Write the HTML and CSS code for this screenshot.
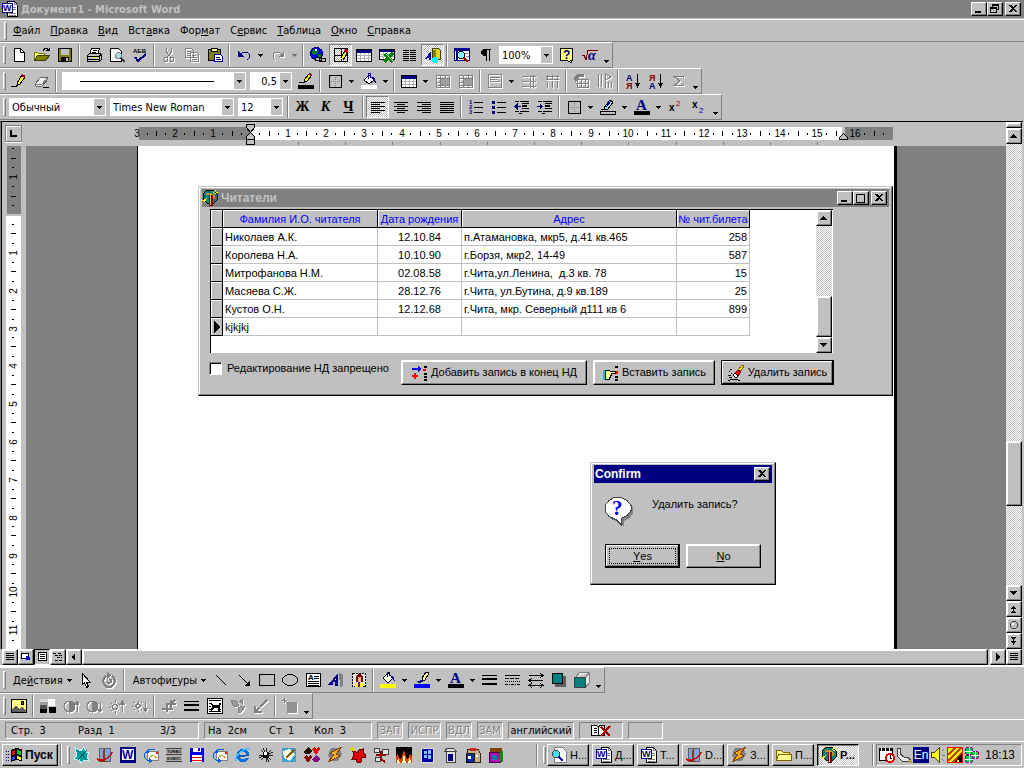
FILE: index.html
```html
<!DOCTYPE html>
<html lang="ru">
<head>
<meta charset="utf-8">
<title>Документ1 - Microsoft Word</title>
<link rel="stylesheet" href="styles.css">
</head>
<body>
<svg class="sprite" aria-hidden="true">
<symbol id="word" viewBox="0 0 16 16"><path d="M5.500.5h7l3 3v12h-10z" fill="#fff" stroke="#000"/><path d="M12.500.5v3h3M10 6.500h4M10 8.500h4M7 12.500h7M7 14h7" stroke="#808080" fill="none"/><path d="M.5 2.500h10v9h-10z" fill="#fff" stroke="#000080"/><text x="1" y="10" font-size="9" font-weight="700" fill="#000080">W</text></symbol>
<symbol id="delphi" viewBox="0 0 16 16"><path d="M5 0h6l4 4v6l-3 3H5L1 9V4z" fill="#008080" stroke="#000"/><path d="M4 4h5l3 2v3" stroke="#c09020" stroke-width="2" fill="none"/><path d="M0 11l4-2M2 12l3-4M11 3l3-3M12 4l4-2" stroke="#ff0" fill="none"/><path d="M7 5h4v11H7z" fill="#800000"/><path d="M8.500 4v11" stroke="#e0c060"/></symbol>
<symbol id="new" viewBox="0 0 16 16"><path d="M3.500 1.500h6l4 4v9h-10z" fill="#fff" stroke="#000"/><path d="M9.500 1.500v4h4" fill="none" stroke="#000"/></symbol>
<symbol id="open" viewBox="0 0 16 16"><path d="M.5 13.500v-8h3l1 1h6v3" fill="#ff8" stroke="#808000"/><path d="M.5 13.500l3-5h12l-4 5z" fill="#808000" stroke="#404000"/><path d="M9 3.500l2-2h2l2 2m0-3v3h-3" fill="none" stroke="#000"/></symbol>
<symbol id="save" viewBox="0 0 16 16"><path d="M1.500 1.500h13v13h-13z" fill="#808000" stroke="#000"/><path d="M4 2h8v6H4z" fill="#c0c0c0"/><path d="M4 10h8v4H4z" fill="#000"/><path d="M9 11h2v3H9z" fill="#c0c0c0"/></symbol>
<symbol id="print" viewBox="0 0 16 16"><path d="M5.500 1.500h8l-2 6h-8z" fill="#fff" stroke="#000"/><path d="M1.500 8.500l2-2h11l1 1v5l-2 2h-12z" fill="#c0c0c0" stroke="#000"/><path d="M2 9.500h11M13.500 14V9l2-2" stroke="#000" fill="none"/><path d="M2 12.500h11" stroke="#000"/><path d="M7 10.500h5" stroke="#ff0"/><path d="M7 3.500h4M6 5.500h4" stroke="#000"/></symbol>
<symbol id="preview" viewBox="0 0 16 16"><path d="M1.500 1.500h8l3 3v10h-11z" fill="#fff" stroke="#000"/><circle cx="9.500" cy="8.500" r="3" fill="#a0e0e8" stroke="#808080"/><path d="M12 11l4 4" stroke="#404040" stroke-width="2"/></symbol>
<symbol id="spell" viewBox="0 0 16 16"><text x="1" y="6" font-size="6" font-weight="700">АБВ</text><path d="M3 10l3 4 8-7" stroke="#000080" stroke-width="2" fill="none"/></symbol>
<symbol id="cut" viewBox="0 0 16 16"><path d="M5.500 1v4l5 6M10.500 1v4l-5 6" fill="none" stroke="#808080"/><circle cx="5" cy="12.500" r="2" fill="none" stroke="#808080"/><circle cx="11" cy="12.500" r="2" fill="none" stroke="#808080"/></symbol>
<symbol id="copy" viewBox="0 0 16 16"><path d="M1.500 1.500h6l2 2v7h-8zM6.500 5.500h6l2 2v7h-8zM3 4.500h4M3 6.500h3M3 8.500h3M8 8.500h4M8 10.500h5M8 12.500h5" fill="none" stroke="#808080"/></symbol>
<symbol id="paste" viewBox="0 0 16 16"><path d="M1.500 2.500h12v11h-12z" fill="#808000" stroke="#000"/><path d="M4.500 1.500h6v3h-6z" fill="#ff8" stroke="#000"/><path d="M7.500 7.500h6l2 2v5h-8z" fill="#fff" stroke="#000080"/><path d="M9 10.500h4M9 12.500h5" stroke="#000080"/></symbol>
<symbol id="undo" viewBox="0 0 16 16"><path d="M4 8l3-3h4l2 2v4l-2 2" fill="none" stroke="#000080"/><path d="M2 4v6h6z" fill="#000080"/></symbol>
<symbol id="redo" viewBox="0 0 16 16"><path d="M12 8L9 5H5L3 7v4l2 2" fill="none" stroke="#808080"/><path d="M14 4v6H8z" fill="#808080"/></symbol>
<symbol id="link" viewBox="0 0 16 16"><circle cx="6.500" cy="6.500" r="6" fill="#00f" stroke="#000080"/><path d="M3 2h4l1 3-3 3-3-1zM8 7h3v3H8z" fill="#008000"/><path d="M5 2h2v2H5z" fill="#fff"/><rect x="5.500" y="10.500" width="6" height="3" rx="1" fill="#c0c0c0" stroke="#000"/><rect x="9.500" y="11.500" width="6" height="3" rx="1" fill="none" stroke="#000"/></symbol>
<symbol id="tabpen" viewBox="0 0 16 16"><path d="M1.500 1.500h13v13h-13zM8.500 2v12M2 8.500h12" fill="none" stroke="#000"/><path d="M9 12l4-7" stroke="#000" stroke-width="4"/><path d="M9 12l4-7" stroke="#ff0" stroke-width="2"/><path d="M12 5l2-2" stroke="#c00000" stroke-width="3"/></symbol>
<symbol id="table" viewBox="0 0 16 16"><path d="M.5 2.500h15v12H.5z" fill="#fff" stroke="#000"/><path d="M1 3h14v3H1z" fill="#000080"/><path d="M1 8.500h14M1 11.500h14M4.500 6v8M8.500 6v8M12.500 6v8" stroke="#b0b0b0"/></symbol>
<symbol id="excel" viewBox="0 0 16 16"><path d="M.5 2.500h15v10H.5z" fill="#fff" stroke="#000"/><path d="M1 3h14v2H1z" fill="#000080"/><path d="M1 7.500h14M1 9.500h14M4.500 5v7" stroke="#b0b0b0"/><path d="M6 7l8 8M14 6l-9 9" stroke="#008000" stroke-width="3"/><path d="M7 7l7 7" stroke="#c0e0c0"/></symbol>
<symbol id="cols" viewBox="0 0 16 16"><path d="M1 3.500h6M1 5.500h6M1 7.500h6M1 9.500h6M1 11.500h6M1 13.500h6M8 3.500h6M8 5.500h6M8 7.500h6M8 9.500h6M8 11.500h6M8 13.500h6" stroke="#000"/></symbol>
<symbol id="draw" viewBox="0 0 16 16"><path d="M7 2l6-1 2 2v9H7z" fill="#e8d020" stroke="#404000"/><path d="M9 3v8" stroke="#808000" stroke-width="3"/><path d="M0 12L6 4v9H4v-2H2v1z" fill="#0000c0"/><circle cx="10" cy="13" r="3" fill="#0ff"/></symbol>
<symbol id="map" viewBox="0 0 16 16"><path d="M.5 1.500h15v12H.5z" fill="#fff" stroke="#000080"/><path d="M1 3h14M3 3v10" stroke="#000080" stroke-width="2"/><circle cx="7" cy="8" r="3.500" fill="#80ffff" stroke="#000"/><path d="M10 11l4 4" stroke="#a00000" stroke-width="2"/><path d="M11 6h3M12 9h3" stroke="#808080"/></symbol>
<symbol id="para" viewBox="0 0 16 16"><path d="M6 2h8v1h-1v11h-1V3h-2v11H9V9H6L4 7V4z"/></symbol>
<symbol id="help" viewBox="0 0 16 16"><path d="M1.500 1.500h12v12h-2l2 3-5-3h-7z" fill="#ffff80" stroke="#000"/><text x="4" y="12" font-size="12" font-weight="700" fill="#000080">?</text></symbol>
<symbol id="sqrt" viewBox="0 0 16 16"><path d="M0 9l2-1 2 5 2-10h10" stroke="#800000" fill="none"/><text x="6" y="13" font-size="14" font-weight="700" font-style="italic" font-family="Liberation Serif" fill="#000080">α</text></symbol>
<symbol id="pencil" viewBox="0 0 16 16"><path d="M6 10l5-8 3 2-5 7-3 1z" fill="#ff0" stroke="#000"/><path d="M11 2l3 2" stroke="#a00000" stroke-width="2"/><path d="M0 13.500h5l2-2" stroke="#000" fill="none"/></symbol>
<symbol id="eraser" viewBox="0 0 16 16"><path d="M1 11l6-7h6l1 2-6 7H2z" fill="#f0f0f0" stroke="#606060"/><path d="M2 11h6l5-6" fill="none" stroke="#808080"/><path d="M9 14.500h6" stroke="#000"/></symbol>
<symbol id="pencolor" viewBox="0 0 16 16"><path d="M6 7l5-6 3 1-5 6-3 1z" fill="#ff0" stroke="#000"/><path d="M11 1l3 1" stroke="#a00000" stroke-width="2"/><path d="M1 9.500h6" stroke="#000"/><path d="M0 12h16v4H0z" fill="#000"/></symbol>
<symbol id="borders" viewBox="0 0 16 16"><path d="M2.500 2.500h12v12h-12z" fill="none" stroke="#000"/><path d="M8.500 4v9M4 8.500h9" fill="none" stroke="#808080" stroke-dasharray="1 1"/></symbol>
<symbol id="bucket" viewBox="0 0 16 16"><path d="M3 7l5-5 5 5-5 4z" fill="#fff" stroke="#000"/><path d="M7.500 6V1l2-1v5" fill="none" stroke="#000080"/><path d="M11 4l3 1 1 6-3-4z" fill="#000080"/><path d="M0 12h16v4H0z" fill="#fff"/></symbol>
<symbol id="merge" viewBox="0 0 16 16"><path d="M1.500 2.500h13v12h-13zM1 5.500h14M5.500 2v12M1 9.500h14M10.500 2v12M1 12.500h14" fill="none" stroke="#808080"/><path d="M6 6h8v6H6z" fill="#a0a0a0"/></symbol>
<symbol id="valign" viewBox="0 0 16 16"><path d="M1.500 1.500h13v13h-13zM3 4.500h10M3 6.500h7M3 8.500h10" fill="none" stroke="#808080"/></symbol>
<symbol id="distr" viewBox="0 0 16 16"><path d="M1 3.500h7M1 8.500h7M1 13.500h7M9.500 2v13M12.500 2v13M9 3.500h6M9 8.500h6M9 13.500h6" fill="none" stroke="#808080"/></symbol>
<symbol id="distc" viewBox="0 0 16 16"><path d="M3.500 8v7M8.500 8v7M13.500 8v7M2 3.500h13M2 6.500h13M3.500 2v5M8.500 2v5M13.500 2v5" fill="none" stroke="#808080"/></symbol>
<symbol id="autof" viewBox="0 0 16 16"><path d="M4.500 6.500h11v8h-11zM4 10.500h11M8.500 6v8M12.500 6v8" fill="none" stroke="#808080"/><path d="M1 4l3-3h7v3H6v3L2 9z" fill="#808080"/></symbol>
<symbol id="tdir" viewBox="0 0 16 16"><path d="M2.500 1v13M5.500 1v13M9.500 9v6M12.500 9v6M15.500 9v6M9.500 1v6l5-3z" fill="none" stroke="#808080"/></symbol>
<symbol id="sorta" viewBox="0 0 16 16"><text x="1" y="8" font-size="9" font-weight="700" fill="#000080">А</text><text x="1" y="16" font-size="9" font-weight="700" fill="#800000">Я</text><path d="M12.500 1v12" stroke="#000"/><path d="M10 10h5l-2.500 5z"/></symbol>
<symbol id="sortz" viewBox="0 0 16 16"><text x="1" y="8" font-size="9" font-weight="700" fill="#800000">Я</text><text x="1" y="16" font-size="9" font-weight="700" fill="#000080">А</text><path d="M12.500 1v12" stroke="#000"/><path d="M10 10h5l-2.500 5z"/></symbol>
<symbol id="sigma" viewBox="0 0 16 16"><path d="M12.500 5V3.500h-9l5 4.500-5 4.500h9V11" fill="none" stroke="#808080" stroke-width="1.500"/></symbol>
<symbol id="al" viewBox="0 0 16 16"><path d="M1 3.500h14M1 5.500h9M1 7.500h14M1 9.500h9M1 11.500h14M1 13.500h9" stroke="#000"/></symbol>
<symbol id="ac" viewBox="0 0 16 16"><path d="M1 3.500h14M4 5.500h8M1 7.500h14M4 9.500h8M1 11.500h14M4 13.500h8" stroke="#000"/></symbol>
<symbol id="ar" viewBox="0 0 16 16"><path d="M1 3.500h14M6 5.500h9M1 7.500h14M6 9.500h9M1 11.500h14M6 13.500h9" stroke="#000"/></symbol>
<symbol id="aj" viewBox="0 0 16 16"><path d="M1 3.500h14M1 5.500h14M1 7.500h14M1 9.500h14M1 11.500h14M1 13.500h14" stroke="#000"/></symbol>
<symbol id="num" viewBox="0 0 16 16"><path d="M6 3.500h9M6 8.500h9M6 13.500h9" stroke="#000"/><g font-size="6" font-weight="700" fill="#000080"><text x="1" y="5">1</text><text x="1" y="10">2</text><text x="1" y="15">3</text></g></symbol>
<symbol id="bul" viewBox="0 0 16 16"><path d="M6 3.500h9M6 8.500h9M6 13.500h9" stroke="#000"/><path d="M1 2h3v3H1zM1 7h3v3H1zM1 12h3v3H1z" fill="#000080"/></symbol>
<symbol id="outd" viewBox="0 0 16 16"><path d="M1 2.500h4M6 2.500h9M1 12.500h4M6 12.500h9M5 14.500h3M8 4.500h7M8 9.500h7" stroke="#000"/><path d="M8 7h5" stroke="#000" stroke-width="2"/><path d="M2 7.500h5" stroke="#000080"/><path d="M0 7.500L4 4v7z" fill="#000080"/></symbol>
<symbol id="ind" viewBox="0 0 16 16"><path d="M1 2.500h4M6 2.500h9M1 12.500h4M6 12.500h9M5 14.500h3M8 4.500h7M8 9.500h7" stroke="#000"/><path d="M8 7h5" stroke="#000" stroke-width="2"/><path d="M0 7.500h4" stroke="#000080"/><path d="M6 7.500L3 4v7z" fill="#000080"/></symbol>
<symbol id="marker" viewBox="0 0 16 16"><path d="M4 9l6-8 3 2-5 7-4 1z" fill="#a0d8e8" stroke="#000"/><path d="M6 8l5-6" stroke="#0000c0"/><path d="M1 10.500h4" stroke="#000"/><path d="M.5 12.500h15v3H.5z" fill="#c0c0c0" stroke="#000"/></symbol>
<symbol id="fcolor" viewBox="0 0 16 16"><text x="2" y="11" font-size="15" font-family="Liberation Serif" font-weight="700" fill="#000080">A</text><path d="M0 12h16v4H0z" fill="#000"/></symbol>
<symbol id="sup" viewBox="0 0 16 16"><text x="1" y="12" font-size="10" font-weight="700">x</text><text x="8" y="7" font-size="8" fill="#a00000">2</text></symbol>
<symbol id="sub" viewBox="0 0 16 16"><text x="1" y="9" font-size="10" font-weight="700">x</text><text x="8" y="14" font-size="8" fill="#0000c0">2</text></symbol>
<symbol id="cursor" viewBox="0 0 16 16"><path d="M4.500 1.500v11l2-2 2 5 2-1-2-4h4z" fill="#fff" stroke="#000"/></symbol>
<symbol id="rotate" viewBox="0 0 16 16"><path d="M11 4l2 2 1 3-1 3-3 3H6l-3-3-1-3 1-3 2-2M8 7l2 1v2l-2 1-2-1" fill="none" stroke="#808080" stroke-width="2"/><path d="M6 0v7l5-4z" fill="#808080"/></symbol>
<symbol id="line" viewBox="0 0 16 16"><path d="M3 3l10 10" stroke="#000"/></symbol>
<symbol id="arrow" viewBox="0 0 16 16"><path d="M3 3l10 10" stroke="#000"/><path d="M14 14V8l-6 6z"/></symbol>
<symbol id="rect" viewBox="0 0 16 16"><path d="M.5 2.500h15v11H.5z" fill="none" stroke="#000"/></symbol>
<symbol id="oval" viewBox="0 0 16 16"><ellipse cx="8" cy="8" rx="7.500" ry="5.500" fill="none" stroke="#000"/></symbol>
<symbol id="tbox" viewBox="0 0 16 16"><path d="M1.500 1.500h14v13h-14z" fill="#fff" stroke="#000"/><text x="3" y="8" font-size="8" font-weight="700">A</text><path d="M9 4.500h5M9 6.500h5M3 9.500h11M3 11.500h11M3 13h11" stroke="#000"/></symbol>
<symbol id="wart" viewBox="0 0 16 16"><path d="M11 1l4 1v12l-3 1z" fill="#808080"/><path d="M0 13L10 1v13H7v-4H5v3z" fill="#000080"/><path d="M6 8h2V6z" fill="#fff"/></symbol>
<symbol id="clip" viewBox="0 0 16 16"><path d="M1.500 1.500h13v13h-13z" fill="#e8e8e8" stroke="#000" stroke-dasharray="2 1"/><path d="M5 4l2-2h3l2 3v5H5z" fill="#800000"/><path d="M7 5h3v5H7z" fill="#ffc080"/><path d="M4 11h8v4H4z" fill="#ff0"/><path d="M7 10h2v5H7z" fill="#800080"/></symbol>
<symbol id="yfill" viewBox="0 0 16 16"><path d="M3 6l5-5 5 5-5 5z" fill="#fff" stroke="#000"/><path d="M7.500 5V0h2v4" fill="none" stroke="#000080"/><path d="M11 4l3 1 1 5-3-3z" fill="#000080"/><path d="M0 12h16v4H0z" fill="#ff0"/></symbol>
<symbol id="lcolor" viewBox="0 0 16 16"><path d="M8 6l4-6 3 1-4 7-3 1z" fill="#ff8" stroke="#000"/><path d="M1 10l6-2 3 1-4 2z" fill="#000080"/><path d="M0 12h16v4H0z" fill="#00f"/></symbol>
<symbol id="lines" viewBox="0 0 16 16"><path d="M0 3.500h15" stroke="#000"/><path d="M0 7h15M0 12h15" stroke="#000" stroke-width="2"/></symbol>
<symbol id="dash" viewBox="0 0 16 16"><path d="M0 3.500h15" stroke="#000"/><path d="M0 6.500h15" stroke="#000" stroke-dasharray="4 1"/><path d="M0 9.500h15" stroke="#000" stroke-dasharray="1 1"/><path d="M0 12.500h15" stroke="#000" stroke-dasharray="3 1 1 1"/></symbol>
<symbol id="arrs" viewBox="0 0 16 16"><path d="M1 3.500h14M1 8.500h14M1 13.500h14M12 1l3 2.500L12 6M4 6L1 8.500 4 11M12 11l3 2.500-3 2M4 11l-3 2.500 3 2" fill="none" stroke="#000"/></symbol>
<symbol id="shadow" viewBox="0 0 16 16"><path d="M4 4h11v11H4z" fill="#606060"/><path d="M1.500 1.500h10v10h-10z" fill="#008080" stroke="#000"/></symbol>
<symbol id="cube" viewBox="0 0 16 16"><path d="M1.500 5.500l4-5h10l-4 5v10l4-5v-10" fill="#e8e8e8" stroke="#808080"/><path d="M.5 5.500h11v10H.5z" fill="#008080" stroke="#404040"/></symbol>
<symbol id="picture" viewBox="0 0 16 16"><path d="M.5 1.500h15v13H.5z" fill="#ff8" stroke="#000"/><path d="M1 14v-3l4-4 3 4 3-2 4 3v2z" fill="#606060"/><circle cx="11.500" cy="5" r="1.500" fill="#808000" stroke="#000"/></symbol>
<symbol id="grays" viewBox="0 0 16 16"><path d="M0 1h8v3H0z" fill="#d8d8d8"/><path d="M8 1h7v7H8z" fill="#fff"/><path d="M0 4h8v3H0z" fill="#a0a0a0"/><path d="M0 9h7v6H0zM9 9h7v6H9z" fill="#000"/><path d="M0 7h7v4H0z" fill="#505050"/></symbol>
<symbol id="con1" viewBox="0 0 16 16"><circle cx="6.500" cy="8.500" r="5.500" fill="none" stroke="#808080"/><path d="M6.500 3v11a5.500 5.500 0 000-11zM14 14V3M12 6l2-3 2 3z" fill="#808080" stroke="#808080"/></symbol>
<symbol id="con2" viewBox="0 0 16 16"><circle cx="6.500" cy="8.500" r="5.500" fill="none" stroke="#808080"/><path d="M6.500 3v11a5.500 5.500 0 000-11zM14 4v10M12 11l2 3 2-3z" fill="#808080" stroke="#808080"/></symbol>
<symbol id="bri1" viewBox="0 0 16 16"><circle cx="6" cy="9" r="2.500" fill="none" stroke="#808080" stroke-width="1.500"/><path d="M6 2v3M6 13v3M0 9h2M2 5l1 1M2 13l1-1M10 5l-1 1M10 13l-1-1M13.500 3v11M11 6l2.500-3L16 6z" fill="#808080" stroke="#808080"/></symbol>
<symbol id="bri2" viewBox="0 0 16 16"><circle cx="6" cy="8" r="2" fill="none" stroke="#808080" stroke-width="1.500"/><path d="M6 3v2M6 12v2M0 8h2M2 4l1 1M2 12l1-1M10 4L9 5M10 12l-1-1M13.500 4v9M11 10l2.500 3 2.500-3z" fill="#808080" stroke="#808080"/></symbol>
<symbol id="crop" viewBox="0 0 16 16"><path d="M5.500 5v9M1 11h11M10 2v9M5 5.500h10M10 6l4-4" fill="none" stroke="#808080" stroke-width="2"/></symbol>
<symbol id="wrap" viewBox="0 0 16 16"><path d="M.5.500h15v15H.5z" fill="#fff" stroke="#000"/><path d="M2 2.500h12M2 13.500h12M2 5.500h2M12 5.500h2M2 8.500h2M2 11h2M12 11h2" stroke="#000"/><path d="M4 5l3 2h4l3-2-1 4v4h-2v-3H7l-2 3H4l1-5z"/></symbol>
<symbol id="fmt" viewBox="0 0 16 16"><path d="M1 2h4l4 5-3 2-3-2zM8 10l4-2 3 1-4 5-3 1zM9 4l3-2v5" fill="#a0a0a0" stroke="#808080"/></symbol>
<symbol id="transp" viewBox="0 0 16 16"><path d="M14 2l-7 7M2 8v6h7" fill="none" stroke="#808080" stroke-width="2"/><path d="M1 15l4-6 2 2z" fill="#808080"/></symbol>
<symbol id="reset" viewBox="0 0 16 16"><path d="M0 2.500h5M2.500 0v5M1 1l4 4" stroke="#808080"/><path d="M5 4h10v11H5z" fill="#909090"/></symbol>
<symbol id="winlogo" viewBox="0 0 16 16"><path d="M0 4h4M0 7h4M0 10h4M0 13h4" stroke="#000080" stroke-dasharray="1 1"/><path d="M5 3l5-2 6 1v12l-6-1-5 2z" fill="#000"/><path d="M6 4l3-1v4l-3 1z" fill="#f00"/><path d="M11 3l4 1v4l-4-1z" fill="#0c0"/><path d="M6 10l3-1v3l-3 1z" fill="#44f"/><path d="M11 9l4 1v3l-4-1z" fill="#ff0"/></symbol>
<symbol id="q-star" viewBox="0 0 16 16"><path d="M1 1l6 3 3-4 2 5 4 0-3 4 2 5-5-1-3 3-2-4-5 1 3-5z" fill="#00a0a0" stroke="#c0ffff"/><path d="M3 3l9 9M13 3l-9 10" stroke="#006060"/></symbol>
<symbol id="q-one" viewBox="0 0 16 16"><path d="M2 1h11v13H2z" fill="#80a0e0" stroke="#606060"/><path d="M5 3l3-1v12h2v1H4v-1h2V4z" fill="#804000"/><path d="M0 12c5 4 15-3 15-7" fill="none" stroke="#d00000" stroke-width="1.500"/></symbol>
<symbol id="q-word" viewBox="0 0 16 16"><path d="M0 0h16v16H0z" fill="#000080"/><path d="M2 2h12v11H2z" fill="#fff"/><text x="2" y="12" font-size="12" font-weight="700" fill="#0000a0">W</text></symbol>
<symbol id="q-mail" viewBox="0 0 16 16"><path d="M4.500 4.500h11v9h-11z" fill="#fff" stroke="#808080"/><path d="M13 5h2v2h-2z" fill="#f00"/><path d="M5 2h7M1 6c0 5 2 7 5 8" fill="none" stroke="#0060e0"/><path d="M2 6l4-5v5zM6 11v5l4-2z" fill="#0060e0"/><path d="M6 11l4-3 4 3" fill="none" stroke="#c0a020"/></symbol>
<symbol id="q-turbo" viewBox="0 0 16 16"><path d="M0 1h16v14H0z" fill="#b0b0b0"/><path d="M0 1.500h16M0 7.500h16M0 14.500h16" stroke="#404040"/><g font-size="4" font-weight="700"><text x="1" y="6">TURBO</text><text x="1" y="13">КОМУС</text></g></symbol>
<symbol id="q-disk" viewBox="0 0 16 16"><path d="M1 1h14v14H1z" fill="#0000e0"/><path d="M4 1h8v4H4zM3 8h10v7H3z" fill="#fff"/><path d="M3 10.500h10M3 13.500h10" stroke="#f00"/><path d="M9 1h2v3H9z" fill="#00f"/></symbol>
<symbol id="q-ie" viewBox="0 0 16 16"><circle cx="8" cy="8.500" r="5" fill="none" stroke="#0070e0" stroke-width="3"/><path d="M4 8.500h10" stroke="#0050c0" stroke-width="2"/><path d="M10 11h6v-2h-6z" fill="#c0c0c0"/><path d="M1 14C-1 9 10 0 15 2" fill="none" stroke="#40c0ff" stroke-width="1.500"/></symbol>
<symbol id="q-burst" viewBox="0 0 16 16"><path d="M8 1v14M1 8h14M3 3l10 10M13 3L3 13M5 1l6 14M1 11l14-6" stroke="#202020"/><path d="M5 5h6v6H5z"/><path d="M6 5h3v3H6z" fill="#fff"/></symbol>
<symbol id="q-note" viewBox="0 0 16 16"><path d="M1 1h14v14H1z" fill="#40a0d0"/><path d="M2 4l6-2 6 5-5 7-6-3z" fill="#ffe"/><path d="M5 11l8-8" stroke="#806000" stroke-width="2"/></symbol>
<symbol id="q-cards" viewBox="0 0 16 16"><path d="M4 0l4 4-2 3H1L0 4z" fill="#201000"/><path d="M8 2l2-2 2 2 2-2 2 2-4 6z" fill="#e00000"/><path d="M0 10l2-2 2 2 2-2 2 2-4 6z" fill="#800000"/><path d="M12 8l4 4-2 3h-4l-2-3z" fill="#800080"/></symbol>
<symbol id="q-bolt" viewBox="0 0 16 16"><path d="M4 1h8l3 6-4 7H4L1 8z" fill="#808080"/><path d="M15 0L3 6l4 2-6 7 12-6-4-2z" fill="#ffb020" stroke="#804000"/></symbol>
<symbol id="q-dragon" viewBox="0 0 16 16"><path d="M2 2l5 4 2-3 4-1v4l3 2-1 3-3-1-1 5H7l-1-3-4 0 2-4z" fill="#e00000" stroke="#600000"/><path d="M0 1l3 3M3 0l1 4" stroke="#e0d000" stroke-width="2"/></symbol>
<symbol id="q-net" viewBox="0 0 16 16"><path d="M1 1h5v4H1zM9 2h6v5H9zM2 10h5v4H2z" fill="#e0e0e0" stroke="#404040"/><path d="M3 8h10M8 4v8l4 3" stroke="#900000" stroke-width="2" fill="none"/></symbol>
<symbol id="q-fire" viewBox="0 0 16 16"><path d="M0 0h16v16H0z"/><path d="M0 16v-6l2-4 1 5 2 1 3-9 3 9 2-1 1-5 2 4v6z" fill="#e04000"/><path d="M1 16l1-6 2 6zM6 16l2-9 2 9zM12 16l2-6 1 6z" fill="#ffb"/></symbol>
<symbol id="q-win" viewBox="0 0 16 16"><path d="M2 1h12v14H2z" fill="#00a" stroke="#e0e0e0"/><path d="M5 4h3v3H5zM9 3h3v4H9zM5 8h3v3H5zM9 8h3v4H9z" fill="#80c0ff"/></symbol>
<symbol id="q-pot" viewBox="0 0 16 16"><path d="M4 4h9v11H4z" fill="#e0e0e0" stroke="#404040"/><path d="M6 7h5v7H6z" fill="#000080"/><path d="M3 4l2-3h6l3 3z" fill="#e0e0e0" stroke="#404040"/></symbol>
<symbol id="q-box" viewBox="0 0 16 16"><path d="M1 6h8v9H1z" fill="#0030a0" stroke="#000"/><path d="M3 2h10l2 4v9H9V6H2z" fill="#c0b090" stroke="#402000"/><path d="M5 1h6v3H5z" fill="#e02020"/><path d="M3 9h3v3H3zM11 8h2v2h-2z" fill="#fff"/></symbol>
<symbol id="q-rar" viewBox="0 0 16 16"><path d="M1 5h11v10H1z" fill="#c000c0" stroke="#400040"/><path d="M2 1h12v4H2z" fill="#804000"/><path d="M12 4h3v11h-3z" fill="#208020"/><path d="M4 8h5v5H4z" fill="#0080a0"/></symbol>
<symbol id="find" viewBox="0 0 16 16"><path d="M3.500.5h8l4 4v11h-12z" fill="#fff" stroke="#808080"/><circle cx="5" cy="7" r="3.500" fill="#40e0ff" stroke="#404040"/><path d="M8 10l4 4" stroke="#0000a0" stroke-width="2"/></symbol>
<symbol id="folder" viewBox="0 0 16 16"><path d="M.5 13.500v-10h5l2 2h6v3" fill="#ff8" stroke="#806000"/><path d="M.5 13.500l2-6h13v6z" fill="#ffff90" stroke="#806000"/></symbol>
<symbol id="t-cal" viewBox="0 0 16 16"><path d="M.5 1.500h13v12H.5z" fill="#fff" stroke="#000"/><path d="M0 1h14v3H0z"/><path d="M2 1v3M6 1v3M10 1v3" stroke="#fff"/><circle cx="11" cy="11" r="4" fill="#fff" stroke="#e00000" stroke-width="2"/><path d="M11 8v3h2" stroke="#000" fill="none"/></symbol>
<symbol id="t-pen" viewBox="0 0 16 16"><path d="M1 1h3v6l4 3h4l3 4-3 1-6-1-4-4z" fill="#e8e8e8" stroke="#404040"/><path d="M13 14l3 1" stroke="#c0a000" stroke-width="2"/></symbol>
<symbol id="t-vol" viewBox="0 0 16 16"><path d="M1.500 5.500h3l5-5v15l-5-5h-3z" fill="#ff0" stroke="#404000"/><path d="M12 4l2-2M12 8h3M12 12l2 2" stroke="#808080"/></symbol>
<symbol id="t-rus" viewBox="0 0 16 16"><path d="M.5.500h15v15H.5z" fill="#ff0" stroke="#f00"/><path d="M1 8l7-7M1 14L14 1M5 16L16 5" stroke="#c04000" stroke-width="2"/><path d="M8 15l6-8h1v8h-3v-2h-2v2z" fill="#000"/></symbol>
<symbol id="t-net" viewBox="0 0 16 16"><circle cx="5" cy="4" r="4" fill="#0c4" stroke="#808"/><circle cx="11" cy="8" r="4" fill="#0c4" stroke="#808"/><circle cx="5" cy="12" r="4" fill="#0c4" stroke="#808"/><path d="M5 0v16M11 4v8M1 4h8M1 12h8M7 8h8" stroke="#fff"/></symbol>
<symbol id="b-add" viewBox="0 0 16 16"><path d="M1 4h8" stroke="#00f" stroke-width="2"/><path d="M7 1l4 3-4 3z" fill="#00f"/><path d="M1 11h6M4 8v6" stroke="#f00" stroke-width="2"/><path d="M13 1h3v2h-3zM13 8h3v2h-3zM13 11h3v2h-3zM13 14h3v2h-3z"/><path d="M12 4h3v2h-3z" fill="#f00"/></symbol>
<symbol id="b-ins" viewBox="0 0 16 16"><path d="M1 5h2v10H1z" fill="#0cc"/><path d="M3.500 5.500h4l1 1h5v2h-5h1v2h-1v2h-1v2h-4z" fill="#ff8" stroke="#000"/><path d="M13 1h3v2h-3zM13 11h3v2h-3zM13 14h3v2h-3z"/><path d="M14 6h2v3h-2z" fill="#f00"/></symbol>
<symbol id="b-del" viewBox="0 0 16 16"><path d="M10 5l4-5 2 1-4 6z" fill="#ff0" stroke="#806000"/><path d="M7 8l3-3 3 2-3 4z" fill="#f00" stroke="#800000"/><path d="M7 8l3 3-2 2-3-3z" fill="#fff" stroke="#000"/><path d="M2 4.500h2M1 6.500h1M3 8.500h1M0 10.500h3M1 12.500h3M2 14.500h8M0 15.500h2M10 15.500h2" stroke="#000"/></symbol>
<symbol id="book" viewBox="0 0 20 16"><path d="M.5 2.500h4l3 1 2-1h4v10h-13z" fill="#fff" stroke="#000"/><path d="M7 3v10M3 5h3M3 7h3M3 9h3" stroke="#000"/><path d="M10 4l9 9M19 3l-9 10" stroke="#a00000" stroke-width="2"/></symbol>
<symbol id="w-min" viewBox="0 0 12 10"><path d="M2 7h6v2H2z"/></symbol>
<symbol id="w-max" viewBox="0 0 12 10"><path d="M1.500 1v8h8V1zM1 1.500h9" fill="none" stroke="#000"/></symbol>
<symbol id="w-res" viewBox="0 0 12 10"><path d="M3.500 3V.5h6v5H8M3 1h7M1.500 3.500h6v5h-6zM1 4h7" fill="none" stroke="#000"/></symbol>
<symbol id="w-x" viewBox="0 0 12 10"><path d="M2 1h2l2 2 2-2h2L7 4.500 10 8H8L6 6 4 8H2l3-3.500z"/></symbol>
<symbol id="up" viewBox="0 0 8 8"><path d="M0 6h7L3.500 2z"/></symbol>
<symbol id="dn" viewBox="0 0 8 8"><path d="M0 2h7L3.500 6z"/></symbol>
<symbol id="lf" viewBox="0 0 8 8"><path d="M5 0v8L1 4z"/></symbol>
<symbol id="rt" viewBox="0 0 8 8"><path d="M2 0v8l4-4z"/></symbol>
<symbol id="up2" viewBox="0 0 8 8"><path d="M1 4h5L3.500 1zM1 8h5L3.500 4z"/></symbol>
<symbol id="dn2" viewBox="0 0 8 8"><path d="M1 0h5L3.500 4zM1 4h5L3.500 8z"/></symbol>
<symbol id="ball" viewBox="0 0 8 8"><path d="M2.500.5h3l2 2v3l-2 2h-3l-2-2v-3z" fill="#c0c0c0" stroke="#404040"/><path d="M2 2h2v2H2z" fill="#fff"/></symbol>
<symbol id="v1" viewBox="0 0 12 10"><path d="M2 1.500h8M2 3.500h8M2 5.500h8M2 7.500h8" stroke="#000"/></symbol>
<symbol id="v2" viewBox="0 0 12 10"><path d="M1.500 1.500h7v5h-7z" fill="#fff" stroke="#000"/><path d="M6 4h3v1h1v3H6z" fill="#00c"/></symbol>
<symbol id="v3" viewBox="0 0 12 10"><path d="M2.500.5h8v8h-8z" fill="#fff" stroke="#000"/><path d="M4 2.500h5M4 4.500h5M4 6.500h5" stroke="#000"/></symbol>
<symbol id="v4" viewBox="0 0 12 10"><path d="M1 1.500h4M6 1.500h4M3 3.500h7M5 5.500h5M3 8h7" stroke="#000" stroke-dasharray="3 1"/></symbol>
</svg>

<header class="titlebar">
<svg class="ic"><use href="#word"/></svg><h1>Документ1 - Microsoft Word</h1>
<button class="wc" aria-label="Свернуть"><svg><use href="#w-min"/></svg></button><button class="wc" aria-label="Восстановить"><svg><use href="#w-res"/></svg></button><button class="wc last" aria-label="Закрыть"><svg><use href="#w-x"/></svg></button>
</header>

<nav class="bar menu"><i class="grip"></i>
<a href="#"><u>Ф</u>айл</a><a href="#"><u>П</u>равка</a><a href="#"><u>В</u>ид</a><a href="#">Вст<u>а</u>вка</a><a href="#">Фор<u>м</u>ат</a><a href="#">С<u>е</u>рвис</a><a href="#"><u>Т</u>аблица</a><a href="#"><u>О</u>кно</a><a href="#"><u>С</u>правка</a>
</nav>

<div class="bar tools" role="toolbar" aria-label="Стандартная"><i class="grip"></i>
<button class="tb" aria-label="Создать"><svg class="ic"><use href="#new"/></svg></button>
<button class="tb" aria-label="Открыть"><svg class="ic"><use href="#open"/></svg></button>
<button class="tb" aria-label="Сохранить"><svg class="ic"><use href="#save"/></svg></button>
<i class="sep"></i>
<button class="tb" aria-label="Печать"><svg class="ic"><use href="#print"/></svg></button>
<button class="tb" aria-label="Просмотр"><svg class="ic"><use href="#preview"/></svg></button>
<button class="tb" aria-label="Правописание"><svg class="ic"><use href="#spell"/></svg></button>
<i class="sep"></i>
<button class="tb off" aria-label="Вырезать"><svg class="ic"><use href="#cut"/></svg></button>
<button class="tb off" aria-label="Копировать"><svg class="ic"><use href="#copy"/></svg></button>
<button class="tb" aria-label="Вставить"><svg class="ic"><use href="#paste"/></svg></button>
<i class="sep"></i>
<button class="tb" aria-label="Отменить"><svg class="ic"><use href="#undo"/></svg></button><button class="dd" aria-label="Список отмены"></button>
<button class="tb off" aria-label="Вернуть"><svg class="ic"><use href="#redo"/></svg></button><button class="dd off" aria-label="Список возврата"></button>
<i class="sep"></i>
<button class="tb" aria-label="Гиперссылка"><svg class="ic"><use href="#link"/></svg></button>
<button class="tb on" aria-label="Таблицы и границы"><svg class="ic"><use href="#tabpen"/></svg></button>
<button class="tb" aria-label="Добавить таблицу"><svg class="ic"><use href="#table"/></svg></button>
<button class="tb" aria-label="Лист Excel"><svg class="ic"><use href="#excel"/></svg></button>
<button class="tb" aria-label="Колонки"><svg class="ic"><use href="#cols"/></svg></button>
<button class="tb on" aria-label="Рисование"><svg class="ic"><use href="#draw"/></svg></button>
<i class="sep"></i>
<button class="tb" aria-label="Схема документа"><svg class="ic"><use href="#map"/></svg></button>
<button class="tb" aria-label="Непечатаемые знаки"><svg class="ic"><use href="#para"/></svg></button>
<label class="combo c-zoom"><select aria-label="Масштаб"><option>100%</option></select></label>
<button class="tb" aria-label="Помощник"><svg class="ic"><use href="#help"/></svg></button>
<button class="tb" aria-label="Формула"><svg class="ic"><use href="#sqrt"/></svg></button>
<button class="dd more" aria-label="Другие кнопки"></button>
</div>

<div class="bar tools" role="toolbar" aria-label="Таблицы и границы"><i class="grip"></i>
<button class="tb" aria-label="Нарисовать таблицу"><svg class="ic"><use href="#pencil"/></svg></button>
<button class="tb" aria-label="Ластик"><svg class="ic"><use href="#eraser"/></svg></button>
<i class="sep"></i>
<label class="combo c-line"><select aria-label="Тип линии"><option></option></select></label>
<label class="combo c-width"><select aria-label="Толщина линии"><option>0,5</option></select></label>
<button class="tb" aria-label="Цвет границы"><svg class="ic"><use href="#pencolor"/></svg></button>
<i class="sep"></i>
<button class="tb" aria-label="Внешние границы"><svg class="ic"><use href="#borders"/></svg></button><button class="dd" aria-label="Вид границ"></button>
<button class="tb" aria-label="Цвет заливки"><svg class="ic"><use href="#bucket"/></svg></button><button class="dd" aria-label="Цвета заливки"></button>
<i class="sep"></i>
<button class="tb" aria-label="Вставить таблицу"><svg class="ic"><use href="#table"/></svg></button><button class="dd" aria-label="Вставка"></button>
<button class="tb off" aria-label="Объединить ячейки"><svg class="ic"><use href="#merge"/></svg></button>
<button class="tb off" aria-label="Разбить ячейки"><svg class="ic"><use href="#merge"/></svg></button>
<i class="sep"></i>
<button class="tb off" aria-label="Выравнивание ячеек"><svg class="ic"><use href="#valign"/></svg></button><button class="dd" aria-label="Виды выравнивания"></button>
<button class="tb off" aria-label="Выровнять строки"><svg class="ic"><use href="#distr"/></svg></button>
<button class="tb off" aria-label="Выровнять столбцы"><svg class="ic"><use href="#distc"/></svg></button>
<i class="sep"></i>
<button class="tb off" aria-label="Автоформат"><svg class="ic"><use href="#autof"/></svg></button>
<button class="tb off" aria-label="Направление текста"><svg class="ic"><use href="#tdir"/></svg></button>
<i class="sep"></i>
<button class="tb" aria-label="По возрастанию"><svg class="ic"><use href="#sorta"/></svg></button>
<button class="tb" aria-label="По убыванию"><svg class="ic"><use href="#sortz"/></svg></button>
<button class="tb off" aria-label="Автосумма"><svg class="ic"><use href="#sigma"/></svg></button>
<button class="dd more" aria-label="Другие кнопки"></button>
</div>

<div class="bar tools" role="toolbar" aria-label="Форматирование"><i class="grip"></i>
<label class="combo c-style"><select aria-label="Стиль"><option>Обычный</option></select></label>
<label class="combo c-font"><select aria-label="Шрифт"><option>Times New Roman</option></select></label>
<label class="combo c-size"><select aria-label="Размер"><option>12</option></select></label>
<i class="sep"></i>
<button class="tb letter">Ж</button><button class="tb letter ital">К</button><button class="tb letter und">Ч</button>
<i class="sep"></i>
<button class="tb on" aria-label="По левому краю"><svg class="ic"><use href="#al"/></svg></button>
<button class="tb" aria-label="По центру"><svg class="ic"><use href="#ac"/></svg></button>
<button class="tb" aria-label="По правому краю"><svg class="ic"><use href="#ar"/></svg></button>
<button class="tb" aria-label="По ширине"><svg class="ic"><use href="#aj"/></svg></button>
<i class="sep"></i>
<button class="tb" aria-label="Нумерация"><svg class="ic"><use href="#num"/></svg></button>
<button class="tb" aria-label="Маркеры"><svg class="ic"><use href="#bul"/></svg></button>
<button class="tb" aria-label="Уменьшить отступ"><svg class="ic"><use href="#outd"/></svg></button>
<button class="tb" aria-label="Увеличить отступ"><svg class="ic"><use href="#ind"/></svg></button>
<i class="sep"></i>
<button class="tb" aria-label="Границы"><svg class="ic"><use href="#borders"/></svg></button><button class="dd" aria-label="Вид границ"></button>
<button class="tb" aria-label="Выделение цветом"><svg class="ic"><use href="#marker"/></svg></button><button class="dd" aria-label="Цвета выделения"></button>
<button class="tb" aria-label="Цвет шрифта"><svg class="ic"><use href="#fcolor"/></svg></button><button class="dd" aria-label="Цвета шрифта"></button>
<button class="tb" aria-label="Верхний индекс"><svg class="ic"><use href="#sup"/></svg></button>
<button class="tb" aria-label="Нижний индекс"><svg class="ic"><use href="#sub"/></svg></button>
<button class="dd more" aria-label="Другие кнопки"></button>
</div>

<main class="editor">
<div class="pane">
<div class="hruler"><button class="tabstop" aria-label="Табуляция"><svg viewBox="0 0 7 7"><path d="M1 0v6h6" fill="none" stroke="#000" stroke-width="2"/></svg></button>
<svg class="hr" aria-hidden="true"><path d="M9 5h111v13H9zM715 5h48v13h-48z" fill="#808080"/><path d="M120 5h592v13H120z" fill="#fff"/>
<path d="M16.500 11.500H118" stroke="#000" stroke-width="2" stroke-dasharray="1 17.900"/><path d="M26 11.500h92" stroke="#000" stroke-width="5" stroke-dasharray="1 36.800"/>
<path d="M129 11.500h582" stroke="#000" stroke-width="2" stroke-dasharray="1 17.900"/><path d="M138.500 11.500h573" stroke="#000" stroke-width="5" stroke-dasharray="1 36.800"/>
<path d="M734 11.500h28" stroke="#000" stroke-width="2" stroke-dasharray="1 17.900"/><path d="M743.500 11.500h10" stroke="#000" stroke-width="5" stroke-dasharray="1 36.800"/>
<path d="M168 21h540" stroke="#808080" stroke-width="3" stroke-dasharray="1 46.200"/>
<g text-anchor="middle"><text x="7" y="15">3</text><text x="45" y="15">2</text><text x="83" y="15">1</text><text x="158" y="15">1</text><text x="196" y="15">2</text><text x="234" y="15">3</text><text x="272" y="15">4</text><text x="309" y="15">5</text><text x="347" y="15">6</text><text x="385" y="15">7</text><text x="423" y="15">8</text><text x="461" y="15">9</text><text x="498" y="15">10</text><text x="536" y="15">11</text><text x="574" y="15">12</text><text x="612" y="15">13</text><text x="650" y="15">14</text><text x="687" y="15">15</text><text x="725" y="15">16</text></g>
<path d="M116.500 2.500h8v3l-4 5-4-5zM116.500 17.500v-3l4-4 4 4v3zM116.500 17.500h8v5h-8zM709.500 17.500v-2l4-4 4 4v2z" fill="#c0c0c0" stroke="#000"/></svg></div>
<div class="work">
<svg class="vr" aria-hidden="true"><path d="M5 0h14v68H5z" fill="#808080"/><path d="M4 70h15v440H4z" fill="#fff"/>
<path d="M11 2v64" stroke="#000" stroke-width="2" stroke-dasharray="1 17.900"/><path d="M11.500 12v50" stroke="#000" stroke-width="5" stroke-dasharray="1 36.800"/>
<path d="M11 78v430" stroke="#000" stroke-width="2" stroke-dasharray="1 17.900"/><path d="M11.500 87v420" stroke="#000" stroke-width="5" stroke-dasharray="1 36.800"/>
<g text-anchor="middle"><text transform="translate(15 31)rotate(-90)">1</text><text transform="translate(15 107)rotate(-90)">1</text><text transform="translate(15 145)rotate(-90)">2</text><text transform="translate(15 183)rotate(-90)">3</text><text transform="translate(15 220)rotate(-90)">4</text><text transform="translate(15 258)rotate(-90)">5</text><text transform="translate(15 296)rotate(-90)">6</text><text transform="translate(15 334)rotate(-90)">7</text><text transform="translate(15 372)rotate(-90)">8</text><text transform="translate(15 410)rotate(-90)">9</text><text transform="translate(15 446)rotate(-90)">10</text><text transform="translate(15 484)rotate(-90)">11</text></g></svg>
<div class="desk"><div class="page"></div></div>
</div>
</div>
<div class="vscroll"><button class="split" aria-label="Разделить"></button><button class="sb" aria-label="Вверх"><svg><use href="#up"/></svg></button><div class="track t1"></div><div class="thumb"></div><div class="track t2"></div><button class="sb" aria-label="Вниз"><svg><use href="#dn"/></svg></button><button class="sb" aria-label="Предыдущая страница"><svg><use href="#up2"/></svg></button><button class="sb" aria-label="Выбор объекта"><svg><use href="#ball"/></svg></button><button class="sb" aria-label="Следующая страница"><svg><use href="#dn2"/></svg></button></div>
</main>
<div class="hscroll"><button class="vb" aria-label="Обычный режим"><svg><use href="#v1"/></svg></button><button class="vb" aria-label="Веб-документ"><svg><use href="#v2"/></svg></button><button class="vb cur" aria-label="Разметка страницы"><svg><use href="#v3"/></svg></button><button class="vb" aria-label="Структура"><svg><use href="#v4"/></svg></button><button class="sb" aria-label="Влево"><svg><use href="#lf"/></svg></button><div class="thumb"></div><button class="sb" aria-label="Вправо"><svg><use href="#rt"/></svg></button><button class="vb" aria-label="Вид"><svg><use href="#v1"/></svg></button></div>

<div class="bar tools" role="toolbar" aria-label="Рисование"><i class="grip"></i>
<button class="txt">Де<u>й</u>ствия</button><button class="dd" aria-label="Меню действий"></button>
<button class="tb" aria-label="Выбор объектов"><svg class="ic"><use href="#cursor"/></svg></button>
<button class="tb off" aria-label="Свободное вращение"><svg class="ic"><use href="#rotate"/></svg></button>
<i class="sep"></i>
<button class="txt">Автофи<u>г</u>уры</button><button class="dd" aria-label="Меню автофигур"></button>
<button class="tb" aria-label="Линия"><svg class="ic"><use href="#line"/></svg></button>
<button class="tb" aria-label="Стрелка"><svg class="ic"><use href="#arrow"/></svg></button>
<button class="tb" aria-label="Прямоугольник"><svg class="ic"><use href="#rect"/></svg></button>
<button class="tb" aria-label="Овал"><svg class="ic"><use href="#oval"/></svg></button>
<button class="tb" aria-label="Надпись"><svg class="ic"><use href="#tbox"/></svg></button>
<button class="tb" aria-label="WordArt"><svg class="ic"><use href="#wart"/></svg></button>
<button class="tb" aria-label="Картинка"><svg class="ic"><use href="#clip"/></svg></button>
<i class="sep"></i>
<button class="tb" aria-label="Заливка"><svg class="ic"><use href="#yfill"/></svg></button><button class="dd" aria-label="Цвета заливки"></button>
<button class="tb" aria-label="Цвет линий"><svg class="ic"><use href="#lcolor"/></svg></button><button class="dd" aria-label="Цвета линий"></button>
<button class="tb" aria-label="Цвет шрифта"><svg class="ic"><use href="#fcolor"/></svg></button><button class="dd" aria-label="Цвета шрифта"></button>
<button class="tb" aria-label="Тип линии"><svg class="ic"><use href="#lines"/></svg></button>
<button class="tb" aria-label="Тип штриха"><svg class="ic"><use href="#dash"/></svg></button>
<button class="tb" aria-label="Вид стрелки"><svg class="ic"><use href="#arrs"/></svg></button>
<button class="tb" aria-label="Тень"><svg class="ic"><use href="#shadow"/></svg></button>
<button class="tb" aria-label="Объем"><svg class="ic"><use href="#cube"/></svg></button>
<button class="dd more" aria-label="Другие кнопки"></button>
</div>
<div class="bar tools" role="toolbar" aria-label="Настройка изображения"><i class="grip"></i>
<button class="tb" aria-label="Добавить рисунок"><svg class="ic"><use href="#picture"/></svg></button>
<i class="sep"></i>
<button class="tb" aria-label="Изображение"><svg class="ic"><use href="#grays"/></svg></button>
<button class="tb off" aria-label="Увеличить контрастность"><svg class="ic"><use href="#con1"/></svg></button>
<button class="tb off" aria-label="Уменьшить контрастность"><svg class="ic"><use href="#con2"/></svg></button>
<button class="tb off" aria-label="Увеличить яркость"><svg class="ic"><use href="#bri1"/></svg></button>
<button class="tb off" aria-label="Уменьшить яркость"><svg class="ic"><use href="#bri2"/></svg></button>
<i class="sep"></i>
<button class="tb off" aria-label="Обрезка"><svg class="ic"><use href="#crop"/></svg></button>
<button class="tb" aria-label="Тип линии"><svg class="ic"><use href="#lines"/></svg></button>
<button class="tb" aria-label="Обтекание текстом"><svg class="ic"><use href="#wrap"/></svg></button>
<button class="tb off" aria-label="Формат объекта"><svg class="ic"><use href="#fmt"/></svg></button>
<button class="tb off" aria-label="Прозрачный цвет"><svg class="ic"><use href="#transp"/></svg></button>
<i class="sep"></i>
<button class="tb off" aria-label="Сброс параметров"><svg class="ic"><use href="#reset"/></svg></button>
<button class="dd more" aria-label="Другие кнопки"></button>
</div>

<div class="status">
<div class="cell s1"><span>Стр.&nbsp; 3</span><span>Разд&nbsp; 1</span><span>3/3</span></div>
<div class="cell s2"><span>На&nbsp; 2см</span><span>Ст&nbsp; 1</span><span>Кол&nbsp; 3</span></div>
<div class="cell s3 dim">ЗАП</div><div class="cell s4 dim">ИСПР</div><div class="cell s3 dim">ВДЛ</div><div class="cell s3 dim">ЗАМ</div>
<div class="cell s5">английский</div><div class="cell s6"><svg class="bk"><use href="#book"/></svg></div><div class="cell s7"></div>
</div>

<footer class="taskbar">
<button class="start"><svg class="ic"><use href="#winlogo"/></svg>Пуск</button>
<i class="sep"></i><i class="grip"></i>
<div class="quick">
<a href="#" aria-label="ICQ"><svg class="ic"><use href="#q-star"/></svg></a><a href="#" aria-label="Delphi 1"><svg class="ic"><use href="#q-one"/></svg></a><a href="#" aria-label="Word"><svg class="ic"><use href="#q-word"/></svg></a><a href="#" aria-label="Почта"><svg class="ic"><use href="#q-mail"/></svg></a><a href="#" aria-label="Turbo"><svg class="ic"><use href="#q-turbo"/></svg></a><a href="#" aria-label="Дискета"><svg class="ic"><use href="#q-disk"/></svg></a><a href="#" aria-label="Outlook"><svg class="ic"><use href="#q-mail"/></svg></a><a href="#" aria-label="Internet Explorer"><svg class="ic"><use href="#q-ie"/></svg></a><a href="#" aria-label="Мина"><svg class="ic"><use href="#q-burst"/></svg></a><a href="#" aria-label="Рабочий стол"><svg class="ic"><use href="#q-note"/></svg></a><a href="#" aria-label="Карты"><svg class="ic"><use href="#q-cards"/></svg></a><a href="#" aria-label="Winamp"><svg class="ic"><use href="#q-bolt"/></svg></a><a href="#" aria-label="Дракон"><svg class="ic"><use href="#q-dragon"/></svg></a><a href="#" aria-label="Сеть"><svg class="ic"><use href="#q-net"/></svg></a><a href="#" aria-label="Огонь"><svg class="ic"><use href="#q-fire"/></svg></a><a href="#" aria-label="Окно"><svg class="ic"><use href="#q-win"/></svg></a><a href="#" aria-label="Утилита"><svg class="ic"><use href="#q-pot"/></svg></a><a href="#" aria-label="Архив"><svg class="ic"><use href="#q-box"/></svg></a><a href="#" aria-label="WinRAR"><svg class="ic"><use href="#q-rar"/></svg></a>
</div>
<i class="sep"></i><i class="grip"></i>
<div class="tasks">
<button><svg class="ic"><use href="#find"/></svg>Н...</button><button><svg class="ic"><use href="#word"/></svg>Д...</button><button><svg class="ic"><use href="#word"/></svg>Т...</button><button><svg class="ic"><use href="#q-one"/></svg>D...</button><button><svg class="ic"><use href="#q-bolt"/></svg>З...</button><button><svg class="ic"><use href="#folder"/></svg>П...</button><button class="active"><svg class="ic"><use href="#delphi"/></svg>Р...</button>
</div>
<i class="sep"></i>
<div class="tray"><svg class="ic"><use href="#t-cal"/></svg><svg class="ic"><use href="#t-pen"/></svg><span class="lang">En</span><svg class="ic"><use href="#t-vol"/></svg><svg class="ic"><use href="#t-rus"/></svg><svg class="ic"><use href="#t-net"/></svg><time>18:13</time></div>
</footer>

<section class="win readers" aria-label="Читатели">
<div class="wtitle gray"><svg class="ic"><use href="#delphi"/></svg><h2>Читатели</h2><button class="wc" aria-label="Свернуть"><svg><use href="#w-min"/></svg></button><button class="wc" aria-label="Развернуть"><svg><use href="#w-max"/></svg></button><button class="wc last" aria-label="Закрыть"><svg><use href="#w-x"/></svg></button></div>
<div class="grid">
<table>
<colgroup><col class="k0"><col class="k1"><col class="k2"><col class="k3"><col class="k4"></colgroup>
<thead><tr><th></th><th>Фамилия И.О. читателя</th><th>Дата рождения</th><th>Адрес</th><th>№ чит.билета</th></tr></thead>
<tbody>
<tr><th></th><td>Николаев А.К.</td><td>12.10.84</td><td>п.Атамановка, мкр5, д.41 кв.465</td><td>258</td></tr>
<tr><th></th><td>Королева Н.А.</td><td>10.10.90</td><td>г.Борзя, мкр2, 14-49</td><td>587</td></tr>
<tr><th></th><td>Митрофанова Н.М.</td><td>02.08.58</td><td>г.Чита,ул.Ленина,&nbsp; д.3 кв. 78</td><td>15</td></tr>
<tr><th></th><td>Масяева С.Ж.</td><td>28.12.76</td><td>г.Чита, ул.Бутина, д.9 кв.189</td><td>25</td></tr>
<tr><th></th><td>Кустов О.Н.</td><td>12.12.68</td><td>г.Чита, мкр. Северный д111 кв 6</td><td>899</td></tr>
<tr><th class="now"><svg class="mark" viewBox="0 0 6 12"><path d="M0 0v12l6-6z"/></svg></th><td>kjkjkj</td><td></td><td></td><td></td></tr>
</tbody></table>
<div class="gscroll"><button class="sb" aria-label="Вверх"><svg><use href="#up"/></svg></button><div class="track"></div><div class="thumb"></div><button class="sb" aria-label="Вниз"><svg><use href="#dn"/></svg></button></div>
</div>
<div class="actions"><label class="chk"><input type="checkbox">Редактирование НД запрещено</label>
<button class="btn a1"><svg class="ic"><use href="#b-add"/></svg>Добавить запись в конец НД</button><button class="btn a2"><svg class="ic"><use href="#b-ins"/></svg>Вставить запись</button><button class="btn a3 def"><svg class="ic"><use href="#b-del"/></svg>Удалить запись</button></div>
</section>

<section class="win confirm" role="dialog" aria-label="Confirm">
<div class="wtitle navy"><h2>Confirm</h2><button class="wc" aria-label="Закрыть"><svg><use href="#w-x"/></svg></button></div>
<div class="msg"><svg class="ask" viewBox="0 0 32 32"><path d="M14 3h6l7 4 3 5v5l-3 5-6 3v6l-6-6-6-1-6-6v-6l4-6z" fill="#808080"/><path d="M11 1.500h7l6 3 4 5v5l-4 5-6 3v6l-5-5-7-3-4-5v-6l4-5z" fill="#fff" stroke="#404040"/><text x="9" y="19" font-size="21" font-weight="700" font-family="Liberation Serif" fill="#00f">?</text></svg><p>Удалить запись?</p></div>
<div class="ync"><button class="btn def focus"><u>Y</u>es</button><button class="btn"><u>N</u>o</button></div>
</section>
</body>
</html>
```
FILE: styles.css
```css
* { box-sizing: border-box; }
body {
  margin: 0; min-height: 100vh; display: flex; flex-direction: column;
  background: #c0c0c0; color: #000; position: relative; overflow: hidden;
  font: 11px/13px "DejaVu Sans Condensed", "DejaVu Sans", sans-serif;
}
.sprite { display: none; }
svg { shape-rendering: crispEdges; font-family: "Liberation Sans", Arial, sans-serif; }
.ic { width: 16px; height: 16px; flex: none; display: block; }
h1, h2, p { margin: 0; font-size: 11px; font-weight: 700; }
button, select { font: inherit; color: inherit; margin: 0; padding: 0; border: 0; background: #c0c0c0; border-radius: 0; }
a { color: inherit; text-decoration: none; }

/* window captions */
.titlebar { height: 18px; display: flex; align-items: center; background: #808080; color: #c0c0c0; padding: 0 3px 0 2px; }
.titlebar h1 { flex: 1; padding-left: 3px; }
.wc {
  width: 16px; height: 14px; flex: none; display: grid; place-items: center;
  border: 1px solid; border-color: #fff #000 #000 #fff; box-shadow: inset -1px -1px #808080;
}
.wc svg { width: 12px; height: 10px; }
.wc.last { margin-left: 2px; }

/* toolbars */
.bar { display: flex; align-items: center; border-top: 1px solid #fff; border-bottom: 1px solid #808080; }
.grip { width: 3px; height: 18px; margin: 0 1px 0 3px; flex: none; border: 1px solid; border-color: #fff #808080 #808080 #fff; }
.menu { height: 23px; margin-top: 1px; padding-left: 1px; }
.menu a { padding: 0 5px; }
.tools { height: 26px; align-self: flex-start; border-right: 1px solid #808080; }
.tb { width: 23px; height: 22px; flex: none; display: grid; place-items: center; }
.tb.on {
  border: 1px solid; border-color: #808080 #fff #fff #808080;
  background: repeating-conic-gradient(#fff 0 25%, #c0c0c0 0 50%) 0 0 / 2px 2px;
}
.off svg { filter: drop-shadow(1px 1px 0 #fff); }
.sep { width: 2px; height: 22px; margin: 0 2px; flex: none; border-left: 1px solid #808080; border-right: 1px solid #fff; }
.dd { width: 11px; height: 22px; flex: none; background: linear-gradient(#000, #000) 3px 10px / 5px 1px no-repeat, linear-gradient(#000, #000) 4px 11px / 3px 1px no-repeat, linear-gradient(#000, #000) 5px 12px / 1px 1px no-repeat; }
.dd.off { opacity: .4; }
.dd.more { background-position: 3px 16px, 4px 17px, 5px 18px; }
.combo { height: 18px; display: flex; flex: none; background: #fff; margin: 0 2px; border: 1px solid #fff; }
.combo select { appearance: none; flex: 1; min-width: 0; background: #fff; padding-left: 2px; outline: 0; }
.combo::after {
  content: ""; width: 11px; height: 16px; pointer-events: none;
  background: linear-gradient(#000, #000) 3px 7px / 5px 1px no-repeat, linear-gradient(#000, #000) 4px 8px / 3px 1px no-repeat, linear-gradient(#000, #000) 5px 9px / 1px 1px no-repeat, #c0c0c0;
}
.c-zoom { width: 54px; margin-left: 3px; }
.c-line { width: 184px; margin-left: 3px; }
.c-line select { background: linear-gradient(#000, #000) 17px 8px / 134px 1px no-repeat, #fff; }
.c-width { width: 42px; }
.c-width select { text-align: right; padding-right: 3px; }
.c-style { width: 97px; }
.c-font { width: 124px; }
.c-size { width: 45px; }
.letter { font: 700 14px/16px "Liberation Serif", serif; }
.ital { font-style: italic; }
.und { text-decoration: underline; }
.txt { height: 22px; padding: 0 1px 0 6px; }

/* editor */
.editor { flex: 1; min-height: 0; display: flex; margin: 1px 1px 0 0; border-top: 1px solid #000; border-left: 1px solid #808080; }
.pane { flex: 1; min-width: 0; display: flex; flex-direction: column; border-left: 1px solid #000; }
.hruler { height: 24px; display: flex; flex: none; overflow: hidden; }
.tabstop { width: 17px; height: 17px; margin: 3px 108px 0 3px; flex: none; display: grid; place-items: center; border: 1px solid #808080; box-shadow: inset 1px 1px #fff, 0 1px #fff; }
.tabstop svg { width: 7px; height: 7px; }
.hr { flex: 1; height: 24px; font-size: 10px; }
.work { flex: 1; min-height: 0; display: flex; }
.vr { width: 24px; height: 100%; flex: none; font-size: 10px; background: #c0c0c0; }
.desk { flex: 1; background: #808080; padding: 0 109px 0 111px; display: flex; }
.page { flex: 1; background: #fff; border-left: 1px solid #000; border-right: 3px solid #000; }
.vscroll { width: 17px; flex: none; display: flex; flex-direction: column; }
.track { background: repeating-conic-gradient(#fff 0 25%, #c0c0c0 0 50%) 0 0 / 2px 2px; }
.sb, .vb, .thumb, .split {
  border: 1px solid; border-color: #fff #000 #000 #fff; box-shadow: inset -1px -1px #808080, inset 1px 1px #fff;
  display: grid; place-items: center; flex: none; background: #c0c0c0;
}
.sb { width: 16px; height: 16px; }
.sb svg { width: 8px; height: 8px; }
.split { height: 6px; width: 16px; }
.vscroll .thumb { height: 65px; width: 16px; }
.t1 { flex: 295; width: 16px; }
.t2 { flex: 79; width: 16px; }
.hscroll { height: 18px; display: flex; flex: none; padding: 0 2px; border-bottom: 2px solid #fff; }
.hscroll .thumb { flex: 1; margin-right: 2px; }
.hscroll > * { height: 16px; }
.vb { width: 16px; }
.vb svg { width: 12px; height: 10px; }
.vb.cur { box-shadow: none; border-color: #000 #fff #fff #000; }

/* status line */
.status { height: 22px; display: flex; align-items: center; gap: 5px; padding-left: 5px; border-top: 1px solid #fff; }
.cell { height: 17px; display: flex; align-items: center; flex: none; border: 1px solid; border-color: #808080 #fff #fff #808080; justify-content: center; }
.s1, .s2 { justify-content: flex-start; padding-left: 5px; }
.s1 { width: 194px; } .s2 { width: 168px; padding-left: 3px; }
.s1 span:nth-child(1) { width: 67px; } .s1 span:nth-child(2) { width: 82px; }
.s2 span:nth-child(1) { width: 61px; } .s2 span:nth-child(2) { width: 45px; }
.s3 { width: 26px; } .s4 { width: 33px; } .s5 { width: 66px; } .s6 { width: 44px; } .s7 { width: 35px; }
.dim { color: #808080; text-shadow: 1px 1px #fff; }
.bk { width: 20px; height: 16px; }

/* taskbar */
.taskbar { height: 27px; display: flex; align-items: center; border-top: 1px solid #fff; padding: 0 2px; font: 12px/14px "Liberation Sans", sans-serif; }
.start { width: 56px; height: 22px; display: flex; align-items: center; gap: 3px; padding-left: 3px; font-weight: 700; border: 1px solid; border-color: #fff #000 #000 #fff; box-shadow: inset -1px -1px #808080; }
.quick { display: flex; flex: 1; gap: 7px; padding-left: 3px; }
.tasks { display: flex; gap: 3px; }
.tasks button { width: 42px; height: 22px; display: flex; align-items: center; gap: 3px; padding-left: 3px; border: 1px solid; border-color: #fff #000 #000 #fff; box-shadow: inset -1px -1px #808080; font-size: 11px; }
.tasks .active { font-weight: 700; border-color: #000 #fff #fff #000; box-shadow: inset 1px 1px #808080; background: repeating-conic-gradient(#fff 0 25%, #c0c0c0 0 50%) 0 0 / 2px 2px; }
.tasks + .sep { margin-left: 13px; }
.tray { height: 22px; display: flex; align-items: center; gap: 1px; padding: 0 6px 0 2px; border: 1px solid; border-color: #808080 #fff #fff #808080; }
.lang { width: 16px; height: 16px; background: #000080; color: #fff; text-align: center; line-height: 16px; }
.tray time { padding-left: 4px; }

/* floating windows */
.win { position: absolute; background: #c0c0c0; border: 1px solid; border-color: #c0c0c0 #000 #000 #c0c0c0; box-shadow: inset -1px -1px #808080, inset 1px 1px #fff; font: 11px/13px "Liberation Sans", sans-serif; padding: 2px 3px; }
.readers { left: 198px; top: 186px; width: 695px; }
.confirm { left: 590px; top: 462px; width: 186px; }
.wtitle { height: 18px; display: flex; align-items: center; padding-right: 2px; }
.wtitle h2 { flex: 1; padding-left: 3px; font-size: 12px; }
.gray { background: #808080; color: #c0c0c0; }
.navy { background: #000080; color: #fff; }
.navy h2 { padding-left: 1px; }
.grid { margin: 2px 56px 0 8px; height: 144px; background: #fff; display: flex; justify-content: space-between; border-top: 1px solid #000; border-left: 1px solid #000; padding-right: 1px; }
table { width: 539px; table-layout: fixed; border-collapse: separate; border-spacing: 0; align-self: flex-start; }
.k0 { width: 12px; } .k1 { width: 155px; } .k2 { width: 84px; } .k3 { width: 215px; } .k4 { width: 73px; }
th, td { height: 18px; padding: 2px 2px 0; line-height: 13px; white-space: nowrap; font-weight: 400; text-align: left; border-right: 1px solid #c0c0c0; border-bottom: 1px solid #c0c0c0; }
th { background: #c0c0c0; border-color: #000; box-shadow: inset 1px 1px #fff; }
thead th { color: #00f; text-align: center; padding: 2px 0 0; }
tbody th { padding: 0 0 0 3px; }
td:nth-child(3) { text-align: center; }
td:nth-child(5) { text-align: right; }
.mark { display: block; width: 6px; height: 12px; }
.gscroll { display: flex; flex-direction: column; }
.gscroll .track { flex: 1; }
.gscroll .thumb { height: 41px; }
.actions { display: flex; align-items: flex-start; padding: 7px 0 8px 7px; }
.chk { display: flex; align-items: center; gap: 5px; width: 192px; height: 17px; white-space: nowrap; }
.chk input { appearance: none; width: 13px; height: 13px; margin: 0; flex: none; background: #fff; border: 1px solid; border-color: #808080 #fff #fff #808080; box-shadow: inset 1px 1px #000; }
.btn { height: 25px; display: flex; align-items: center; justify-content: center; gap: 4px; white-space: nowrap; border: 1px solid; border-color: #fff #000 #000 #fff; box-shadow: inset -1px -1px #808080, inset 1px 1px #fff; }
.a1 { width: 186px; margin-right: 6px; } .a2 { width: 122px; margin-right: 6px; } .a3 { width: 113px; }
.def { border-color: #000; box-shadow: inset -1px -1px #000, inset 1px 1px #fff, inset -2px -2px #808080; }
.msg { display: flex; gap: 17px; padding: 13px 0 0 9px; }
.ask { width: 32px; height: 32px; }
.msg p { font-weight: 400; padding-top: 2px; }
.ync { display: flex; gap: 6px; padding: 16px 0 14px 11px; }
.ync .btn { width: 75px; height: 24px; gap: 0; }
.focus { outline: 1px dotted #000; outline-offset: -5px; }
```
